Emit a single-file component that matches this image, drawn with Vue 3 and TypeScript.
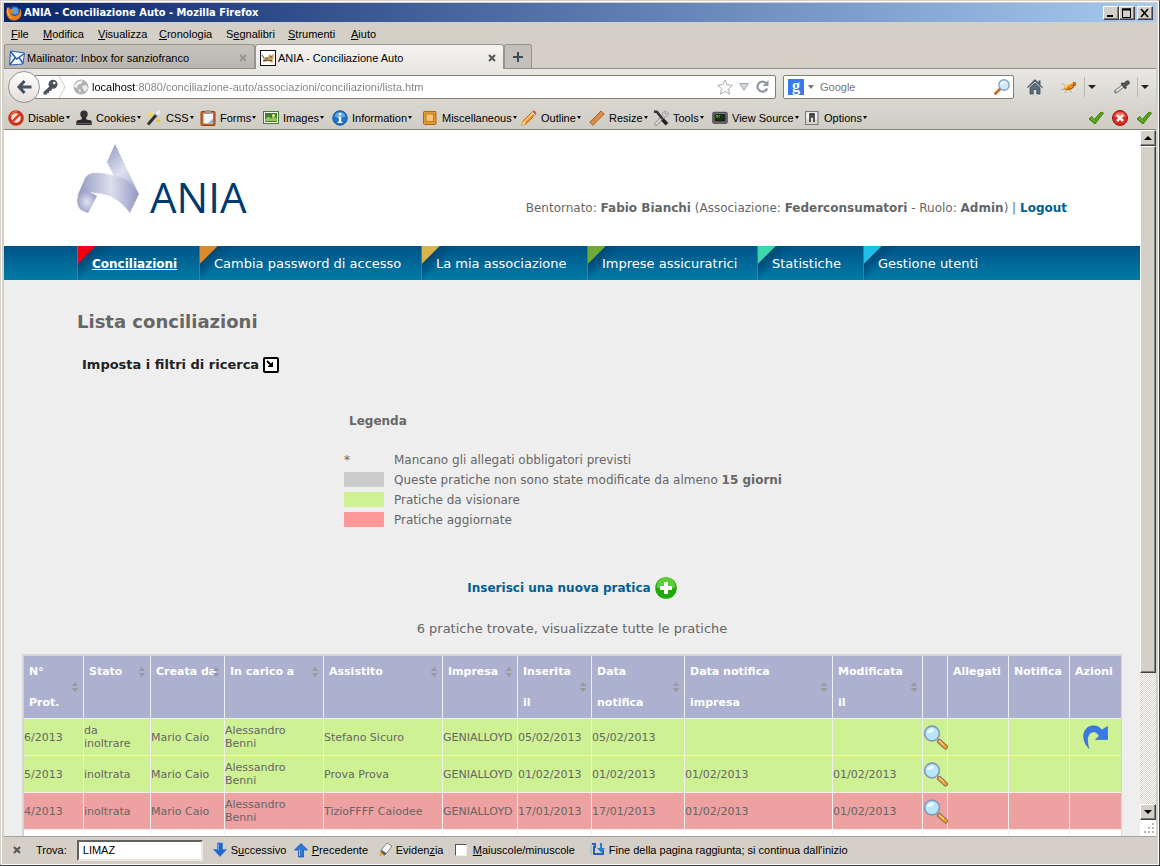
<script setup lang="ts">
import { ref } from 'vue'

interface Tool { label: string; icon: string }
interface Row {
  id: string; state: string; by: string; owner: string; client: string; company: string
  entered: string; notified: string; companyNotified: string; modified: string
  tone: string; forward: boolean
}

const menus = ['File', 'Modifica', 'Visualizza', 'Cronologia', 'Segnalibri', 'Strumenti', 'Aiuto']
const menuKeys = [0, 0, 0, 0, 1, 0, 0]

const tools: Tool[] = [
  { label: 'Disable', icon: 'disable' },
  { label: 'Cookies', icon: 'cookies' },
  { label: 'CSS', icon: 'css' },
  { label: 'Forms', icon: 'forms' },
  { label: 'Images', icon: 'images' },
  { label: 'Information', icon: 'info' },
  { label: 'Miscellaneous', icon: 'misc' },
  { label: 'Outline', icon: 'outline' },
  { label: 'Resize', icon: 'resize' },
  { label: 'Tools', icon: 'tools' },
  { label: 'View Source', icon: 'source' },
  { label: 'Options', icon: 'options' },
]

const icons: Record<string, string> = {
  disable: '<circle cx="8" cy="8" r="6.3" fill="#f4ded8" stroke="#c8321c" stroke-width="3"/><path d="M3.6 12.4 12.4 3.6" stroke="#d8402a" stroke-width="2.6"/><path d="M2.5 5.5A6.3 6.3 0 0 1 9 1.8" stroke="#f28a70" fill="none"/>',
  cookies: '<circle cx="8" cy="4.2" r="3.700" fill="#333"/><path d="M6 7h4l.4 2.500 3.900.8c1.200.3 1.400 1 1.400 2V15H.3v-2.700c0-1 .3-1.700 1.400-2l3.900-.8z" fill="#292929"/><path d="M1 13.500h14" stroke="#666"/>',
  css: '<path d="M2 14.500 11 4" stroke="#333" stroke-width="3"/><path d="M10 5 13.500 1" stroke="#eee" stroke-width="3"/><path d="M4 1l1 2.500L7.500 4 5 5.300 4.500 8 3 5.500.5 5l2.200-1.200z" fill="#ffd83c"/><path d="M12.500 8l.7 1.800 2 .5-1.800 1-.4 2-1.200-1.700-2-.3 1.600-1.200z" fill="#f5bd20"/>',
  forms: '<rect x="1" y="1.500" width="14" height="14" rx="1" fill="#c26a2a" stroke="#8e4210"/><rect x="3.500" y="3.500" width="9.500" height="10" fill="#f4f6fa"/><rect x="5" y="0" width="6" height="4" rx="1" fill="#999"/><path d="M7.500 13.500l5.500-5v5z" fill="#9fb0c8"/>',
  images: '<rect x=".5" y="1.500" width="15" height="12" fill="#fff" stroke="#4b7a38"/><rect x="2" y="3" width="12" height="9" fill="#3f7e35"/><path d="M2 10c2-4 4-4 6-1 2-3 4-2 6 0v2H2z" fill="#9cc956"/><circle cx="10.500" cy="5.500" r="1.500" fill="#fff27a"/>',
  info: '<circle cx="8" cy="8" r="7.200" fill="#1f74c7" stroke="#0f549c"/><path d="M2.500 6.500a5.700 5.700 0 0 1 11 0q-5.500 2-11 0" fill="#63a8e4"/><rect x="6.900" y="3" width="2.300" height="2.300" fill="#fff"/><path d="M5.800 6.700h3.400v5h1.200v1.300H5.600v-1.300h1.300V8H5.800z" fill="#fff"/>',
  misc: '<rect x="1.500" y="1.500" width="12.500" height="13" rx="1" fill="#e39a35" stroke="#a8661a"/><rect x="4" y="4" width="7.500" height="7.500" fill="#f5c672" stroke="#bd7825"/>',
  outline: '<path d="M.8 15.200 2 11 11.500 1.500l3 3L5 14z" fill="#f0912a" stroke="#b95d12" stroke-width=".8"/><path d="M3 12 12 3" stroke="#ffd27a" stroke-width="1.200"/><path d="M.8 15.200 2 11l3 3z" fill="#f2d7aa"/><path d="M10.500 2.500l1-1 3 3-1 1z" fill="#ddd"/><path d="M11.500 1.500l1-1q2 0 3 3l-1 1z" fill="#d9503a"/>',
  resize: '<path d="M.8 12.200 12 1l3.200 3L4 15.200z" fill="#dc9148" stroke="#a8642a"/><path d="M4 10l.8.8M6 8l.7.7M8 6l.8.8M10 4l.7.7" stroke="#8e4e1c" stroke-width=".7"/>',
  tools: '<path d="M3 14 11.500 5.500" stroke="#888" stroke-width="3.600" stroke-linecap="round"/><path d="M3 14 11.500 5.500" stroke="#ddd" stroke-width="2" stroke-linecap="round"/><path d="M15 2.500 13 4.500l-1.500-1.300 1.700-2.200A3.700 3.700 0 0 0 9.400 5.500l1.600 1.700a3.600 3.600 0 0 0 4-4.700" fill="#d4d4d4" stroke="#888" stroke-width=".7"/><path d="M1 1.500l3 .5 5.500 7" stroke="#333" stroke-width="2.600" fill="none"/><path d="M9.500 9.500 14 14.300" stroke="#222" stroke-width="3.600"/>',
  source: '<rect x=".8" y="2.300" width="14.400" height="11" rx="1" fill="#777" stroke="#444"/><rect x="2.500" y="4" width="11" height="7.500" fill="#1d2b1a"/><path d="M4 5.500h2M4 7h3.500M7 5.500h1" stroke="#6bb84c"/>',
  options: '<rect x="1.500" y="1.500" width="12.500" height="13" fill="#d4d4d0" stroke="#777"/><rect x="2.500" y="2.500" width="10.500" height="7" fill="#f3f3f3"/><path d="M6 12V4h4v8M8 4v4" stroke="#222" stroke-width="1.500" fill="none"/>',
  check: '<path d="M1 9 3.500 6.500l3 2.700L13 2l2.500 1L7 14z" fill="#4fa514" stroke="#2d7004" stroke-width=".8"/><path d="m3.500 8 3 3" stroke="#8fd24a"/>',
  error: '<circle cx="8" cy="8" r="7.500" fill="#d82a1f" stroke="#9c1710"/><path d="M2 6.500a6.300 6.300 0 0 1 12 0q-6 2-12 0" fill="#f0665a"/><path d="m5 5 6 6m0-6-6 6" stroke="#fff" stroke-width="2.600"/>',
  home: '<path d="M0 8.300 7 1l1-.7L9 1l2.500 2.500V1.500h2V6L16 8.300l-.9.800L8 2.500.9 9.100z" fill="#4a5966"/><path d="M3 8.500 8 4l5 4.500V15h-3.200v-4.500H6.200V15H3z" fill="#5d6c7a" stroke="#3f4c58" stroke-width=".8"/>',
  bug: '<path d="M3.500 6 .5 4.500M4 10 0 10.500M6 11l-2.500 3M9 11l1.500 2.500" stroke="#b6a88c"/><ellipse cx="8.500" cy="7.500" rx="6" ry="3.200" transform="rotate(-24 8.500 7.500)" fill="#e88f20"/><circle cx="13" cy="5" r="2.300" fill="#c06a1c"/><path d="M4 9q3-5 8-5" stroke="#ffe0a0" fill="none" stroke-width="1.500"/><path d="M6 10.500q5 0 7-3" stroke="#8f4a12" fill="none"/>',
  dropper: '<path d="M2 12.500 9 7" stroke="#858585" stroke-width="4" stroke-linecap="round"/><path d="M2.200 12.300 9 7" stroke="#e4e4e4" stroke-width="1.800"/><path d="m7.500 4 4.500 5.500" stroke="#333" stroke-width="2"/><path d="m10.500 6 3-2.300" stroke="#555" stroke-width="4.600" stroke-linecap="round"/>',
  key: '<circle cx="11" cy="5.200" r="4.500" fill="#4b545d"/><path d="M8 7 1.500 13v2.500H5V14h2v-2h2l1.500-3z" fill="#4b545d"/><circle cx="12.200" cy="4" r="1.300" fill="#fff"/>',
  globe: '<circle cx="8" cy="8" r="7.500" fill="#b2b2b2"/><path d="M2 5q4-5 8-3L8 5 5 6 4 9 1 8zM9 7l4-1 2 3-3 4-2-3zM5 10l3 1-1 3z" fill="#eee"/>',
  star: '<path d="m8 .8 2.200 4.900 5.200.5-3.900 3.600 1.100 5.300L8 12.400l-4.600 2.700 1.100-5.300L.6 6.200l5.200-.5z" fill="#fafafa" stroke="#aab0b6"/>',
  reload: '<path d="M12.200 9.500A5 5 0 1 1 11 4" fill="none" stroke="#8d98a3" stroke-width="2.200"/><path d="M13.500 1v6h-6z" fill="#8d98a3"/>',
  lens: '<path d="M7 9 1.500 14.500" stroke="#c4712c" stroke-width="3" stroke-linecap="round"/><circle cx="10" cy="6" r="5.200" fill="#cfe8fa" stroke="#7fa5c7" stroke-width="1.400"/><path d="M7 5.500q1-3 4-2.500" stroke="#fff" stroke-width="1.500" fill="none"/>',
  mail: '<path d="M1.500 1 15.500 3 14 14 .5 15z" fill="#f4f8ff" stroke="#2c5eb8"/><path d="M1.500 1.500l6 7.500 8-5.500M1 14.500l5-6.500m4-.5 4 6" stroke="#2c5eb8" stroke-width="1.500" fill="none"/><path d="M0 6h3M0 9h2" stroke="#5d8add"/>',
  cat: '<rect x=".5" y=".5" width="15" height="15" fill="#fff" stroke="#111"/><path d="M2 5l2.500 3L8 7l1.500-3L11 5.500 14 4l-.7 4.500L12.500 10l.5 2.500h-2.500L9.500 11l-4 .5L3 13l1-3z" fill="#c9a060"/><path d="M3 10.500h9M5 8l3 .5M10 6.500l2 .5M2 5l2 3" stroke="#66503a"/>',
  fox: '<circle cx="8" cy="8" r="7" fill="#26539d"/><circle cx="9" cy="6" r="3.500" fill="#5b9fdf"/><path d="M2 1.500C.3 4-.5 9 2 12.500c3 4.200 10 3.800 12.500-.5 1.500-2.600 1.200-6-.5-8.500 0 4-1 6-3.500 7C8 11.600 5 10.200 5.500 8L8 7.500 6.500 6 7 4 4 4.500z" fill="#ea7a16"/><path d="M2 3C1 7 2 11 6 13" stroke="#ffce45" fill="none"/>',
  down: '<path d="M5.500 1h5v6.500h4L8 14.500 1.500 7.500h4z" fill="#1f66cc" stroke="#3d7ed4" stroke-width=".7"/><path d="M6.500 2v6.500" stroke="#68a7ef"/>',
  up: '<path d="M5.500 15h5V8h4L8 1.500 1.500 8h4z" fill="#2d78db" stroke="#174c9d" stroke-width=".7"/><path d="M6.500 14V7.500" stroke="#8cc2fa"/>',
  marker: '<path d="M4 8 10 1l5 3-5.500 7.500z" fill="#f7f7f7" stroke="#80868c"/><path d="m3.500 8 6 3.500-2 2-3.500-2z" fill="#555"/><path d="m4 10 3 2.500-5 2z" fill="#f3a51d"/>',
  wrap: '<path d="M2 2h3v3H4v7h9V8" fill="none" stroke="#2464b8" stroke-width="2"/><path d="M10 1v5H7l4.200 4.500L15 6h-3V1z" fill="#2d78db"/><path d="M1 2v11" stroke="#93b8df"/>',
  plus: '<circle cx="11" cy="11" r="10.800" fill="#20a90d"/><path d="M1.500 10a9.500 9.500 0 0 1 19 0q-9.500 5-19 0" fill="#5bcf34"/><path d="M11 5v12M5 11h12" stroke="#fff" stroke-width="4"/>',
  magnify: '<path d="m16.500 16.500 6 5.500" stroke="#8b6f5a" stroke-width="5" stroke-linecap="round"/><path d="m16.500 16.500 6 5.500" stroke="#f3a32d" stroke-width="3" stroke-linecap="round"/><path d="m16 15.500 5 4.500" stroke="#ffe3a0" stroke-width="1"/><circle cx="9" cy="8.500" r="7.400" fill="#b7e6fa" stroke="#8498b5" stroke-width="1.600"/><path d="M4 8q1-5 7-4.500Q12 8 4 8" fill="#eefaff"/>',
  forward: '<path d="M6 23.500C-3 14 0 1 10.500.8q5 0 8.300 4.200L24.500 1.500v13H12.500L16.500 11Q12.500 5 8 7.500C4 10 3.500 16 6 23.500z" fill="#3a78e6" stroke="#2f62c4" stroke-width=".6"/>',
  expand: '<rect x="1" y="1" width="14" height="14" rx="1" fill="#fff" stroke="#000" stroke-width="2"/><path d="m4 4 4.500 4.500" stroke="#000" stroke-width="2"/><path d="M10 4.500V10H4.500z" fill="#000"/>',
}

const sections = [
  { label: 'Conciliazioni', tone: 'red' },
  { label: 'Cambia password di accesso', tone: 'orange' },
  { label: 'La mia associazione', tone: 'sand' },
  { label: 'Imprese assicuratrici', tone: 'leaf' },
  { label: 'Statistiche', tone: 'mint' },
  { label: 'Gestione utenti', tone: 'sky' },
]

const columns = [
  { lines: ['N°', 'Prot.'], sort: true },
  { lines: ['Stato'], sort: true },
  { lines: ['Creata da'], sort: true },
  { lines: ['In carico a'], sort: true },
  { lines: ['Assistito'], sort: true },
  { lines: ['Impresa'], sort: true },
  { lines: ['Inserita', 'il'], sort: true },
  { lines: ['Data', 'notifica'], sort: true },
  { lines: ['Data notifica', 'impresa'], sort: true },
  { lines: ['Modificata', 'il'], sort: true },
  { lines: [''], sort: false },
  { lines: ['Allegati'], sort: false },
  { lines: ['Notifica'], sort: false },
  { lines: ['Azioni'], sort: false },
]

const rows: Row[] = [
  { id: '6/2013', state: 'da inoltrare', by: 'Mario Caio', owner: 'Alessandro Benni', client: 'Stefano Sicuro', company: 'GENIALLOYD', entered: '05/02/2013', notified: '05/02/2013', companyNotified: '', modified: '', tone: 'green', forward: true },
  { id: '5/2013', state: 'inoltrata', by: 'Mario Caio', owner: 'Alessandro Benni', client: 'Prova Prova', company: 'GENIALLOYD', entered: '01/02/2013', notified: '01/02/2013', companyNotified: '01/02/2013', modified: '01/02/2013', tone: 'green', forward: false },
  { id: '4/2013', state: 'inoltrata', by: 'Mario Caio', owner: 'Alessandro Benni', client: 'TizioFFFF Caiodee', company: 'GENIALLOYD', entered: '17/01/2013', notified: '17/01/2013', companyNotified: '01/02/2013', modified: '01/02/2013', tone: 'pink', forward: false },
]

const address = ref('localhost:8080/conciliazione-auto/associazioni/conciliazioni/lista.htm')
const query = ref('')
const find = ref('LIMAZ')
const matchCase = ref(false)
</script>

<template>
  <div class="window">
    <header class="titlebar">
      <svg class="i16" viewBox="0 0 16 16" v-html="icons.fox"></svg>
      <span class="caption">ANIA - Conciliazione Auto - Mozilla Firefox</span>
      <button class="sys" aria-label="Riduci"><svg viewBox="0 0 12 10"><path d="M2 8h6" stroke="#000" stroke-width="2" /></svg></button>
      <button class="sys" aria-label="Ingrandisci"><svg viewBox="0 0 12 10"><path d="M1.500 1v8.500h8V1M1 1h9" stroke="#000" fill="none" /><path d="M1 1.500h9" stroke="#000" stroke-width="2" /></svg></button>
      <button class="sys last" aria-label="Chiudi"><svg viewBox="0 0 12 10"><path d="m2 1 7 8m0-8-7 8" stroke="#000" stroke-width="1.600" /></svg></button>
    </header>

    <nav class="menubar">
      <button v-for="(m, n) in menus" :key="m">{{ m.slice(0, menuKeys[n]) }}<u>{{ m[menuKeys[n]] }}</u>{{ m.slice(menuKeys[n] + 1) }}</button>
    </nav>

    <div class="tabs">
      <div class="tab">
        <svg class="i16" viewBox="0 0 16 16" v-html="icons.mail"></svg>
        <button class="tab-name">Mailinator: Inbox for sanziofranco</button>
        <button class="close" aria-label="Chiudi scheda"><svg viewBox="0 0 8 8"><path d="m1 1 6 6m0-6-6 6" /></svg></button>
      </div>
      <div class="tab active">
        <svg class="i16" viewBox="0 0 16 16" v-html="icons.cat"></svg>
        <button class="tab-name">ANIA - Conciliazione Auto</button>
        <button class="close" aria-label="Chiudi scheda"><svg viewBox="0 0 8 8"><path d="m1 1 6 6m0-6-6 6" /></svg></button>
      </div>
      <button class="newtab" aria-label="Nuova scheda"><svg viewBox="0 0 10 10"><path d="M5 0v10M0 5h10" stroke="#3d4c5b" stroke-width="2" /></svg></button>
    </div>

    <div class="navbar">
      <button class="back" aria-label="Indietro"><svg viewBox="0 0 16 16"><path d="M8.500 2 3 8l5.500 6M3 8h12.500" stroke="#46525e" stroke-width="3" fill="none" /></svg></button>
      <div class="location">
        <svg class="i16" viewBox="0 0 16 16" v-html="icons.key"></svg>
        <svg class="chevron" viewBox="0 0 8 22"><path d="m1 0 6 11-6 11" fill="none" stroke="#ccc" /></svg>
        <svg class="i16" viewBox="0 0 16 16" v-html="icons.globe"></svg>
        <input v-model="address" class="address" aria-label="Indirizzo" />
        <button aria-label="Aggiungi ai segnalibri"><svg class="i16" viewBox="0 0 16 16" v-html="icons.star"></svg></button>
        <button aria-label="Cronologia indirizzi"><svg class="tri" viewBox="0 0 10 8"><path d="M.5.500h9L5 7.500z" fill="#d0d5da" stroke="#a9b0b7" /></svg></button>
        <button aria-label="Ricarica"><svg class="i16" viewBox="0 0 16 16" v-html="icons.reload"></svg></button>
      </div>
      <div class="search">
        <button class="engine" aria-label="Motore di ricerca"><span class="g">g</span><svg class="small" viewBox="0 0 6 4"><path d="M0 0h6L3 4z" fill="#777" /></svg></button>
        <input v-model="query" placeholder="Google" aria-label="Cerca" />
        <button aria-label="Avvia ricerca"><svg class="i16" viewBox="0 0 16 16" v-html="icons.lens"></svg></button>
      </div>
      <button class="addon home" aria-label="Pagina iniziale"><svg class="i16" viewBox="0 0 16 16" v-html="icons.home"></svg></button>
      <button class="addon" aria-label="Firebug"><svg class="i16" viewBox="0 0 16 16" v-html="icons.bug"></svg></button>
      <button class="drop" aria-label="Opzioni Firebug"><svg viewBox="0 0 8 4"><path d="M0 0h8L4 4z" fill="#222" /></svg></button>
      <button class="addon" aria-label="Contagocce"><svg class="i16" viewBox="0 0 16 16" v-html="icons.dropper"></svg></button>
      <button class="drop" aria-label="Opzioni contagocce"><svg viewBox="0 0 8 4"><path d="M0 0h8L4 4z" fill="#222" /></svg></button>
    </div>

    <div class="devbar">
      <div class="dev-tools">
        <button v-for="t in tools" :key="t.label"><svg class="i16" viewBox="0 0 16 16" v-html="icons[t.icon]"></svg><span>{{ t.label }}</span><svg class="dot" viewBox="0 0 4 3"><path d="M0 0h4L2 3z" /></svg></button>
      </div>
      <div class="status">
        <svg class="i16" viewBox="0 0 16 16" v-html="icons.check"></svg>
        <svg class="i16" viewBox="0 0 16 16" v-html="icons.error"></svg>
        <svg class="i16" viewBox="0 0 16 16" v-html="icons.check"></svg>
      </div>
    </div>

    <div class="viewport">
      <div class="page">
        <header class="brand">
          <a href="#" class="logo" aria-label="ANIA">
            <svg viewBox="0 0 64 72">
              <defs>
                <linearGradient id="band" x1="0" y1="0" x2="1" y2="0"><stop offset="0" stop-color="#9298bf" /><stop offset=".55" stop-color="#dddfec" /><stop offset="1" stop-color="#9298c4" /></linearGradient>
                <linearGradient id="blade" x1="0" y1="0" x2=".6" y2="1"><stop offset="0" stop-color="#8f98c2" /><stop offset=".6" stop-color="#dfe1ee" /><stop offset="1" stop-color="#b5badb" /></linearGradient>
                <radialGradient id="curl"><stop offset="0" stop-color="#e2e3f0" /><stop offset="1" stop-color="#9da3c9" /></radialGradient>
              </defs>
              <path d="M38 1 30 19 37 33Q50 38 62 51z" fill="url(#blade)" />
              <path d="M0 54 8 35Q12 29 22 30 45 32 55 41L62 51 53 70Q38 50 17 50 8 46 0 54z" fill="url(#band)" />
              <path d="M0 57Q1 49 11 48L20 53 11 70Q0 68 0 57z" fill="url(#curl)" />
            </svg>
            <span>ANIA</span>
          </a>
          <p class="welcome">Bentornato: <b>Fabio Bianchi</b> (Associazione: <b>Federconsumatori</b> - Ruolo: <b>Admin</b>) | <a href="#">Logout</a></p>
        </header>

        <nav class="sections">
          <a v-for="(s, n) in sections" :key="s.label" href="#" :class="[s.tone, { current: n === 0 }]"><span>{{ s.label }}</span></a>
        </nav>

        <main>
          <h1>Lista conciliazioni</h1>
          <button class="filters">Imposta i filtri di ricerca <svg class="i16" viewBox="0 0 16 16" v-html="icons.expand"></svg></button>

          <section class="legend">
            <h2>Legenda</h2>
            <dl>
              <dt>*</dt><dd>Mancano gli allegati obbligatori previsti</dd>
              <dt><i class="grey"></i></dt><dd>Queste pratiche non sono state modificate da almeno <b>15 giorni</b></dd>
              <dt><i class="green"></i></dt><dd>Pratiche da visionare</dd>
              <dt><i class="pink"></i></dt><dd>Pratiche aggiornate</dd>
            </dl>
          </section>

          <a href="#" class="insert">Inserisci una nuova pratica <svg viewBox="0 0 22 22" v-html="icons.plus"></svg></a>
          <p class="count">6 pratiche trovate, visualizzate tutte le pratiche</p>

          <table>
            <colgroup><col v-for="n in 14" :key="n" :class="'c' + n" /></colgroup>
            <thead>
              <tr>
                <th v-for="(c, n) in columns" :key="n" scope="col">
                  <div class="head">
                    <span><template v-for="(l, k) in c.lines" :key="k"><br v-if="k" />{{ l }}</template></span>
                    <svg v-if="c.sort" class="sorter" viewBox="0 0 8 10"><path d="M4 0l3.500 4h-7zM4 10l3.500-4h-7z" fill="#9899a3" /></svg>
                  </div>
                </th>
              </tr>
            </thead>
            <tbody>
              <tr v-for="r in rows" :key="r.id" :class="r.tone">
                <td>{{ r.id }}</td><td>{{ r.state }}</td><td>{{ r.by }}</td><td>{{ r.owner }}</td><td>{{ r.client }}</td>
                <td>{{ r.company }}</td><td>{{ r.entered }}</td><td>{{ r.notified }}</td><td>{{ r.companyNotified }}</td><td>{{ r.modified }}</td>
                <td class="icon"><a href="#" aria-label="Dettaglio"><svg class="i24" viewBox="0 0 25 25" v-html="icons.magnify"></svg></a></td>
                <td></td><td></td>
                <td class="icon action"><a v-if="r.forward" href="#" aria-label="Inoltra"><svg class="i24" viewBox="0 0 25 25" v-html="icons.forward"></svg></a></td>
              </tr>
              <tr class="white"><td v-for="n in 14" :key="n"></td></tr>
            </tbody>
          </table>
        </main>
      </div>
      <div class="scrollbar">
        <button aria-label="Scorri su"><svg viewBox="0 0 8 4"><path d="M0 4h8L4 0z" /></svg></button>
        <div class="thumb"></div>
        <div class="track"></div>
        <button aria-label="Scorri giù"><svg viewBox="0 0 8 4"><path d="M0 0h8L4 4z" /></svg></button>
        <svg class="grip" viewBox="0 0 16 16"><path d="M12 4h2M8 8h2M12 8h2M4 12h2M8 12h2M12 12h2" stroke="#b8b5ae" stroke-width="2" /></svg>
      </div>
    </div>

    <footer class="findbar">
      <button class="close" aria-label="Chiudi ricerca"><svg viewBox="0 0 8 8"><path d="m1 1 6 6m0-6-6 6" /></svg></button>
      <label for="find">Trova:</label>
      <input id="find" v-model="find" class="find" />
      <button class="next"><svg class="i16" viewBox="0 0 16 16" v-html="icons.down"></svg><span>S<u>u</u>ccessivo</span></button>
      <button class="prev"><svg class="i16" viewBox="0 0 16 16" v-html="icons.up"></svg><span><u>P</u>recedente</span></button>
      <button class="mark"><svg class="i16" viewBox="0 0 16 16" v-html="icons.marker"></svg><span>Eviden<u>z</u>ia</span></button>
      <label class="case"><input v-model="matchCase" type="checkbox" /><span><u>M</u>aiuscole/minuscole</span></label>
      <span class="wrapped"><svg class="i16" viewBox="0 0 16 16" v-html="icons.wrap"></svg>Fine della pagina raggiunta; si continua dall'inizio</span>
    </footer>
  </div>
</template>

<style>
html, body { margin: 0; background: #d4d0c8; }
</style>

<style scoped>
* { box-sizing: border-box; }
.window {
  display: flex; flex-direction: column; height: 100vh; overflow: hidden;
  padding: 2px 2px 1px 3px; border: 1px solid #d4d0c8; border-right: 2px solid #404040; border-bottom: 2px solid #404040;
  outline: 1px solid #fff; outline-offset: -2px;
  background: #d4d0c8; color: #000;
  font: 11px/14px "Liberation Sans", Roboto, sans-serif;
}
button { padding: 0; border: 0; background: none; color: inherit; font: inherit; white-space: nowrap; }
input { border: 0; padding: 0; background: none; font: inherit; min-width: 0; }
svg { display: block; flex: none; }
.i16 { width: 16px; height: 16px; }
.i24 { width: 25px; height: 25px; }

.titlebar { display: flex; align-items: center; height: 19px; flex: none; padding: 0 3px 0 2px; background: linear-gradient(90deg, #0a246a, #a6caf0); color: #fff; }
.caption { flex: 1; margin-left: 2px; font-family: "DejaVu Sans Condensed", sans-serif; font-weight: bold; }
.sys { width: 16px; height: 14px; border: 1px solid; border-color: #fff #404040 #404040 #fff; background: #d4d0c8; box-shadow: inset -1px -1px #808080; }
.sys svg { width: 12px; height: 10px; margin: 0 auto; }
.sys.last { margin-left: 2px; }

.menubar { display: grid; grid-template-columns: 32px 55px 61px 67px 62px 63px auto; flex: none; height: 22px; padding: 1px 0 0 7px; align-items: center; }
.menubar button { text-align: left; }

.tabs { display: flex; flex: none; height: 25px; border-bottom: 1px solid #8f8c86; }
.tab { display: flex; align-items: center; width: 251px; height: 24px; padding: 2px 7px 0 4px; border: 1px solid #96938d; border-bottom: 0; border-radius: 3px 3px 0 0; background: linear-gradient(#c6c3bc, #b9b6b0); }
.tab.active { width: 249px; height: 25px; background: linear-gradient(#f4f3f0, #e8e7e3); }
.tab-name { flex: 1; margin-left: 2px; text-align: left; }
.close { width: 8px; height: 8px; flex: none; }
.close svg { width: 8px; height: 8px; fill: none; stroke: #555; stroke-width: 2; }
.tab:not(.active) .close svg { stroke: #979590; }
.newtab { width: 28px; height: 24px; border: 1px solid #96938d; border-bottom: 0; border-radius: 3px 3px 0 0; background: #c3c0b9; }
.newtab svg { width: 10px; height: 10px; margin: 0 auto; }

.navbar { display: flex; align-items: center; flex: none; height: 36px; padding: 0 7px 0 4px; background: linear-gradient(#e8e7e3, #d8d5ce); }
.back { position: relative; z-index: 1; width: 32px; height: 32px; flex: none; border: 1px solid #96938d; border-radius: 50%; background: linear-gradient(#fff, #e2e0dc); }
.back svg { width: 16px; height: 16px; margin: 0 auto; }
.location { display: flex; align-items: center; flex: 1; height: 24px; margin-left: -6px; padding: 0 4px 0 7px; border: 1px solid #817f79; border-radius: 2px; background: #fff; }
.chevron { width: 8px; height: 22px; margin: 0 7px 0 0; }
.address { flex: 1; margin-left: 3px; color: transparent; background: linear-gradient(90deg, #000 44px, #808080 44px); background-clip: text; -webkit-background-clip: text; }
.location button { margin-left: 6px; }
.tri { width: 10px; height: 8px; }
.search { display: flex; align-items: center; width: 231px; height: 24px; margin-left: 7px; padding: 0 3px 0 4px; border: 1px solid #817f79; border-radius: 2px; background: #fff; }
.search input { flex: 1; margin-left: 6px; }
.search input::placeholder { color: #777; opacity: 1; }
.engine { display: flex; align-items: center; gap: 4px; }
.g { width: 16px; height: 16px; background: #3b78f0; color: #fff; font: bold 16px/13px "Liberation Serif", serif; }
.small { width: 6px; height: 4px; }
.addon { margin-left: 18px; }
.addon.home { margin-left: 13px; }
.drop { height: 20px; margin-left: 7px; padding: 0 0 0 3px; border-left: 1px solid #bcb9b2; }
.drop svg { width: 8px; height: 4px; }

.devbar { display: flex; align-items: center; flex: none; height: 25px; padding: 1px 4px 0 4px; border-bottom: 1px solid #85827c; background: linear-gradient(#d8d5ce, #d0cdc5); }
.dev-tools { display: grid; grid-template-columns: 68px 70px 54px 63px 69px 90px 99px 68px 64px 59px 92px auto; flex: 1; justify-content: start; }
.dev-tools button { display: flex; align-items: center; }
.dev-tools span { margin-left: 4px; }
.dot { width: 4px; height: 3px; margin-left: 1px; }
.status { display: flex; gap: 8px; }

.viewport { display: flex; flex: 1; min-height: 0; background: #eee; }
.page { flex: 1; min-width: 0; overflow: hidden; color: #666; font: 13px/20px Verdana, "DejaVu Sans", sans-serif; }
.page a { text-decoration: none; }
.brand { display: flex; justify-content: space-between; align-items: flex-end; height: 116px; padding: 0 73px 28px 73px; background: #fff; }
.logo { display: flex; align-items: flex-end; height: 75px; color: #003a70; font: 42px/42px "Open Sans", "Noto Sans", sans-serif; }
.logo svg { width: 64px; height: 72px; margin-bottom: 3px; }
.logo span { margin-left: 9px; }
.welcome { margin: 0; font-size: 12px; }
.page .welcome a, .page .insert { color: #006093; font-weight: bold; }

.sections { display: grid; grid-template-columns: 122px 222px 166px 170px 106px auto; height: 34px; padding-left: 73px; background: linear-gradient(#005488, #007ba6); }
.sections a { display: flex; align-items: center; padding: 2px 0 0 14px; border-left: 1px solid #3f7f92; color: #fff; background: linear-gradient(135deg, var(--tone) 12px, #004a78 13px, transparent 26px); white-space: nowrap; }
.red { --tone: #f00014; }
.orange { --tone: #dc8a2c; }
.sand { --tone: #d8b44a; }
.leaf { --tone: #6cac34; }
.mint { --tone: #3ed6ac; }
.sky { --tone: #1fbdea; }
.sections .current { font-size: 12px; font-weight: bold; text-decoration: underline; }

main { padding: 0 18px; }
h1 { margin: 31px 0 0 55px; font-size: 18px; line-height: 22px; }
.filters { display: flex; align-items: center; gap: 4px; margin: 22px 0 0 60px; color: #222; font-weight: bold; line-height: 20px; }
.legend { margin: 36px 0 0 322px; font-size: 12px; }
h2 { margin: 0 0 19px 5px; font-size: 12px; line-height: 20px; }
dl { display: grid; grid-template-columns: 50px 1fr; margin: 0; }
dt, dd { margin: 0; white-space: nowrap; }
dt i { display: block; width: 40px; height: 15px; margin-top: 2px; }
i.grey { background: #ccc; }
i.green { background: #cef194; }
i.pink { background: #ff9999; }
.insert { display: flex; align-items: center; justify-content: center; gap: 4px; margin-top: 47px; font-size: 12px; line-height: 22px; }
.insert svg { width: 22px; height: 22px; }
.count { margin: 20px 0 15px; text-align: center; }

table { width: 100%; table-layout: fixed; border-collapse: separate; border-spacing: 0; border: solid #d6d6da; border-width: 2px 1px 0 2px; font-size: 11px; line-height: 13px; }
.c1 { width: 60px } .c2 { width: 67px } .c3 { width: 74px } .c4 { width: 99px } .c5 { width: 119px } .c6 { width: 75px } .c7 { width: 74px }
.c8 { width: 93px } .c9 { width: 148px } .c10 { width: 90px } .c11 { width: 25px } .c12 { width: 61px } .c13 { width: 61px } .c14 { width: 51px }
th, td { padding: 0; border: solid #f0f0f0; border-width: 0 1px 1px 0; text-align: left; }
th:last-child, td:last-child { border-right: 0; }
th { background: #abb1cf; color: #fff; vertical-align: top; line-height: 31px; white-space: nowrap; }
.head { position: relative; min-height: 31px; padding-left: 5px; }
.sorter { position: absolute; top: 50%; right: 4px; width: 8px; height: 10px; margin-top: -5px; }
td { height: 37px; padding-right: 6px; }
.icon { padding-right: 0; }
td a { display: block; }
.action a { margin-left: 13px; }
tr.green { background: #cef194; }
tr.pink { background: #eda1a1; }
tr.white { background: #fff; }

.scrollbar { display: flex; flex-direction: column; width: 16px; flex: none; background: #ece9e4; }
.scrollbar button { height: 16px; border: 1px solid; border-color: #fff #404040 #404040 #fff; background: #d4d0c8; box-shadow: inset -1px -1px #808080; }
.scrollbar button svg { width: 8px; height: 4px; margin: 0 auto; }
.thumb { flex: 4; border: 1px solid; border-color: #fff #404040 #404040 #fff; background: #d4d0c8; box-shadow: inset -1px -1px #808080; }
.track { flex: 1; background: repeating-conic-gradient(#fff 0 25%, #d4d0c8 0 50%) 0 0 / 2px 2px; }
.grip { width: 16px; height: 16px; background: #fff; }

.findbar { display: flex; align-items: center; flex: none; height: 27px; padding-left: 9px; border-top: 1px solid #a5a29b; }
.findbar button:not(.close), .wrapped, .case { display: flex; align-items: center; gap: 3px; }
.findbar label { margin-left: 15px; }
.find { width: 126px; height: 21px; margin-left: 10px; padding: 0 4px; border: 2px solid; border-color: #606060 #e8e6e1 #e8e6e1 #606060; background: #fff; }
.findbar .next { width: 81px; margin-left: 9px; }
.findbar .prev { width: 84px; }
.findbar .mark { width: 78px; }
.findbar .case { width: 135px; margin-left: 0; gap: 6px; }
.case input { appearance: none; width: 12px; height: 12px; margin: 0; border: 1px solid #555; border-right-color: #eee; border-bottom-color: #eee; background: #fff; }
.case input:checked { background: #316ac5; }
</style>
